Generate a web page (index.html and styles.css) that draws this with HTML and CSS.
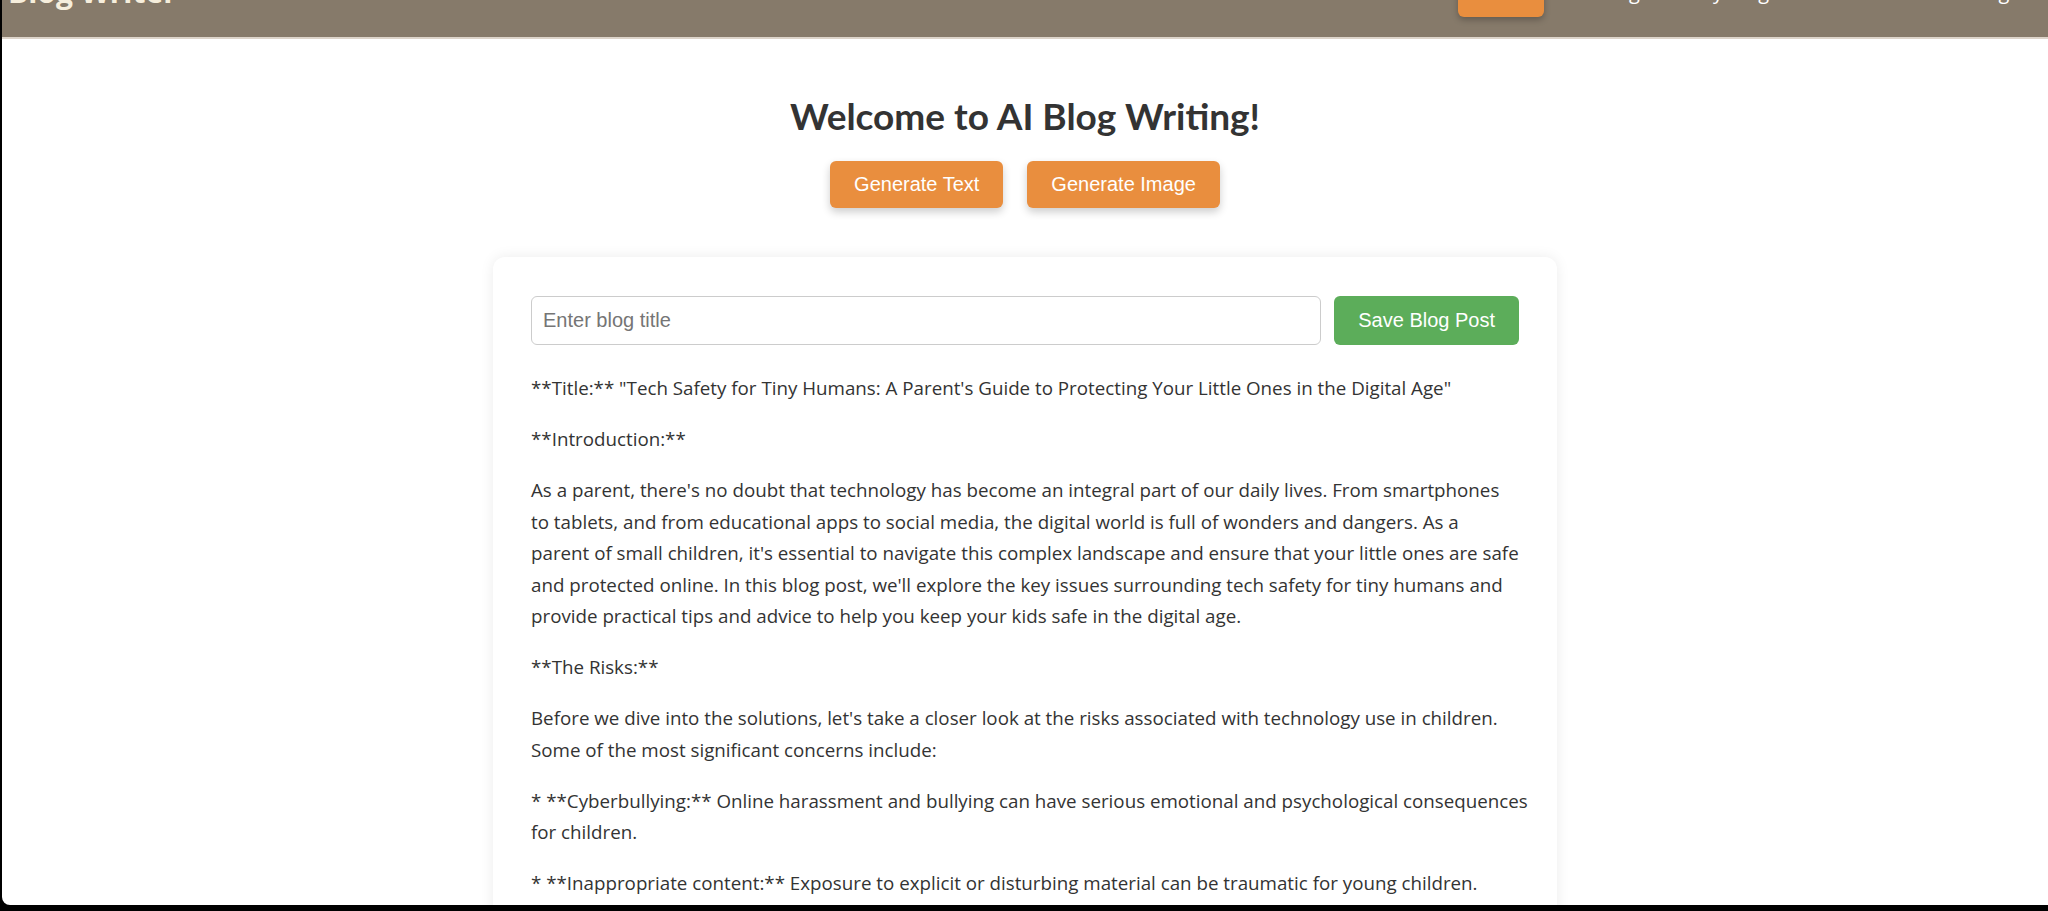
FILE: index.html
```html
<!DOCTYPE html>
<html lang="en">
<head>
<meta charset="utf-8">
<title>Blog Writer</title>
<link rel="stylesheet" href="styles.css">
</head>
<body>
<div class="window">
  <header class="topbar">
    <div class="topbar-inner">
      <div class="brand">Blog Writer</div>
      <nav class="nav">
        <a class="nav-btn" href="#">Home</a>
        <a class="nav-link" href="#">Blog</a>
        <a class="nav-link" href="#">My Blogs</a>
        <a class="nav-link" href="#">About</a>
        <a class="nav-link" href="#">Settings</a>
      </nav>
    </div>
  </header>
  <main class="main">
    <h1 class="welcome">Welcome to AI Blog Writing!</h1>
    <div class="actions">
      <button class="btn btn-orange">Generate Text</button>
      <button class="btn btn-orange">Generate Image</button>
    </div>
    <section class="card">
      <div class="title-row">
        <input class="title-input" type="text" placeholder="Enter blog title">
        <button class="btn btn-green">Save Blog Post</button>
      </div>
      <div class="content">
        <p>**Title:** "Tech Safety for Tiny Humans: A Parent's Guide to Protecting Your Little Ones in the Digital Age"</p>
        <p>**Introduction:**</p>
        <p>As a parent, there's no doubt that technology has become an integral part of our daily lives. From smartphones<br>to tablets, and from educational apps to social media, the digital world is full of wonders and dangers. As a<br>parent of small children, it's essential to navigate this complex landscape and ensure that your little ones are safe<br>and protected online. In this blog post, we'll explore the key issues surrounding tech safety for tiny humans and<br>provide practical tips and advice to help you keep your kids safe in the digital age.</p>
        <p>**The Risks:**</p>
        <p>Before we dive into the solutions, let's take a closer look at the risks associated with technology use in children.<br>Some of the most significant concerns include:</p>
        <p>* **Cyberbullying:** Online harassment and bullying can have serious emotional and psychological consequences<br>for children.</p>
        <p>* **Inappropriate content:** Exposure to explicit or disturbing material can be traumatic for young children.</p>
        <p>* **Online predators:** Children can be targeted by strangers who may try to exploit their trust.</p>
      </div>
    </section>
  </main>
</div>
</body>
</html>
```
FILE: styles.css
```css
html, body {
  margin: 0;
  padding: 0;
}
body {
  background: #000;
  font-family: "Open Sans", "Noto Sans", sans-serif;
  color: #333;
}
.window {
  margin-left: 2px;
  height: 905px;
  background: #fff;
  border-bottom-left-radius: 8px;
  overflow: hidden;
}
.topbar {
  height: 37px;
  background: #867a6a;
  border-bottom: 2px solid #ddd4ca;
  overflow: hidden;
}
.topbar-inner {
  display: flex;
  align-items: center;
  justify-content: space-between;
  height: 80px;
  margin-top: -49px;
  padding: 0 29px 0 6px;
}
.brand {
  font-size: 30px;
  font-weight: 700;
  color: #f6eedc;
}
.nav {
  display: flex;
  align-items: center;
  gap: 55px;
}
.nav a {
  font-size: 20px;
  color: #fff;
  text-decoration: none;
}
.nav-btn {
  background: #e98e3e;
  border-radius: 6px;
  padding: 12px 15px;
  box-shadow: 0 3px 6px rgba(0, 0, 0, 0.25);
}
.main {
  display: flex;
  flex-direction: column;
  align-items: center;
  padding-top: 55px;
}
.welcome {
  margin: 0;
  font-family: "Lato", "Open Sans", sans-serif;
  font-size: 37px;
  line-height: 43px;
  font-weight: 700;
  color: #333;
}
.actions {
  display: flex;
  gap: 24px;
  margin-top: 24px;
}
.btn {
  font-family: "Liberation Sans", Arial, sans-serif;
  font-size: 20px;
  line-height: 23px;
  color: #fff;
  border: none;
  border-radius: 6px;
  padding: 12px 24px;
  cursor: pointer;
}
.btn-orange {
  background: #e98e3e;
  box-shadow: 0 4px 8px rgba(0, 0, 0, 0.2);
}
.btn-green {
  background: #5cad5a;
  padding: 13px 24px;
}
.card {
  box-sizing: border-box;
  width: 1064px;
  margin-top: 49px;
  padding: 39px 38px;
  background: #fff;
  border-radius: 12px;
  box-shadow: 0 0 14px rgba(0, 0, 0, 0.08);
}
.title-row {
  display: flex;
  gap: 13px;
}
.title-input {
  flex: 1;
  box-sizing: border-box;
  height: 49px;
  padding: 0 11px;
  border: 1px solid #ccc;
  border-radius: 6px;
  font-family: "Liberation Sans", Arial, sans-serif;
  font-size: 20px;
  color: #333;
}
.title-input::placeholder {
  color: #757575;
}
.content {
  margin-top: 27px;
  font-size: 18.75px;
  line-height: 31.5px;
}
.content p {
  margin: 0 0 19.5px;
  white-space: nowrap;
}
```
